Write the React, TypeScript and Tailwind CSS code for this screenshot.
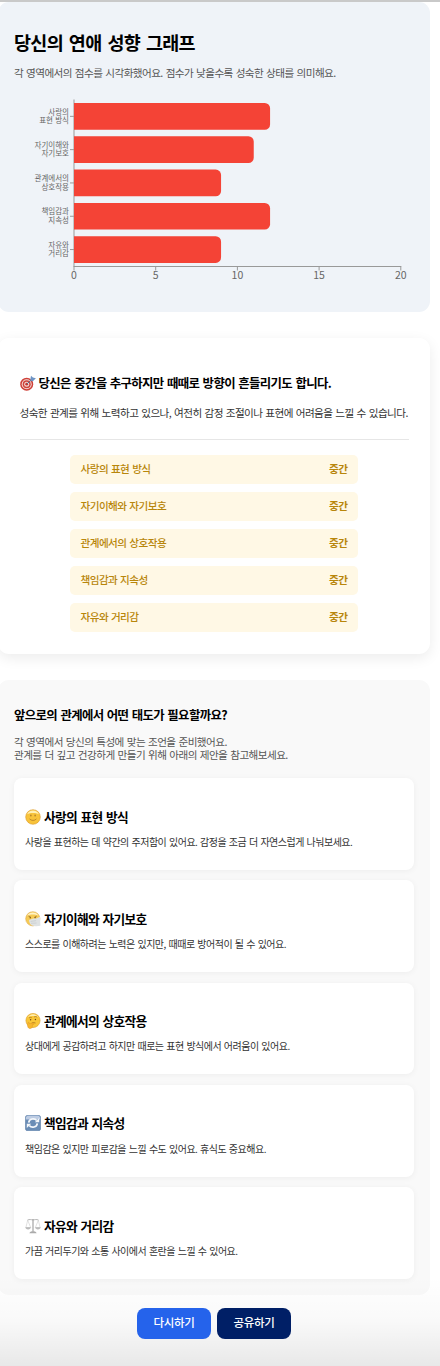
import type { ReactNode } from 'react';

type IconName = 'smile' | 'mask' | 'thinking' | 'cycle' | 'scales';

interface Score {
  area: string;
  lines: [string, string];
  value: number;
  level: string;
  icon: IconName;
  advice: string;
}

const SCORES: Score[] = [
  {
    area: '사랑의 표현 방식',
    lines: ['사랑의', '표현 방식'],
    value: 12,
    level: '중간',
    icon: 'smile',
    advice: '사랑을 표현하는 데 약간의 주저함이 있어요. 감정을 조금 더 자연스럽게 나눠보세요.',
  },
  {
    area: '자기이해와 자기보호',
    lines: ['자기이해와', '자기보호'],
    value: 11,
    level: '중간',
    icon: 'mask',
    advice: '스스로를 이해하려는 노력은 있지만, 때때로 방어적이 될 수 있어요.',
  },
  {
    area: '관계에서의 상호작용',
    lines: ['관계에서의', '상호작용'],
    value: 9,
    level: '중간',
    icon: 'thinking',
    advice: '상대에게 공감하려고 하지만 때로는 표현 방식에서 어려움이 있어요.',
  },
  {
    area: '책임감과 지속성',
    lines: ['책임감과', '지속성'],
    value: 12,
    level: '중간',
    icon: 'cycle',
    advice: '책임감은 있지만 피로감을 느낄 수도 있어요. 휴식도 중요해요.',
  },
  {
    area: '자유와 거리감',
    lines: ['자유와', '거리감'],
    value: 9,
    level: '중간',
    icon: 'scales',
    advice: '가끔 거리두기와 소통 사이에서 혼란을 느낄 수 있어요.',
  },
];

const TICKS = [0, 5, 10, 15, 20];

// Plot area inside the 400x200 chart
const LEFT = 60;
const TOP = 8.5;
const BASE = 175.5;
const UNIT = 16.34;
const BAND = 33.3;
const BAR = 26.7;

function barPath(x: number, y: number, w: number, h: number, r: number) {
  return `M${x} ${y}h${w - r}a${r} ${r} 0 0 1 ${r} ${r}v${h - 2 * r}a${r} ${r} 0 0 1 ${-r} ${r}h${-(w - r)}z`;
}

function ScoreChart() {
  return (
    <svg width="400" height="200" viewBox="0 0 400 200" className="mt-2.5 block">
      <path d={`M${LEFT} ${TOP}V${BASE}`} stroke="#999" strokeWidth="1" />
      <path d={`M${LEFT - 0.5} ${BASE}H${LEFT + UNIT * 20 + 0.5}`} stroke="#999" strokeWidth="1" />
      {SCORES.map((s, i) => {
        const y = 12 + i * BAND;
        const mid = y + BAR / 2;
        return (
          <g key={s.area}>
            <path d={barPath(LEFT, y, s.value * UNIT, BAR, 5.3)} fill="#f44336" />
            <path d={`M${LEFT - 4} ${mid}h4`} stroke="#999" strokeWidth="1" />
            <g className="fill-[#666] text-[7.5px] [word-spacing:0.5px]" textAnchor="end">
              <text x={LEFT - 5} y={mid - 1.8}>{s.lines[0]}</text>
              <text x={LEFT - 5} y={mid + 6.6}>{s.lines[1]}</text>
            </g>
          </g>
        );
      })}
      {TICKS.map(t => (
        <g key={t}>
          <path d={`M${LEFT + t * UNIT} ${BASE}v4`} stroke="#999" strokeWidth="1" />
          <text x={LEFT + t * UNIT} y={BASE + 12.2} textAnchor="middle" className="fill-[#666] text-[10.5px]">
            {t}
          </text>
        </g>
      ))}
    </svg>
  );
}

function TargetIcon() {
  return (
    <svg width="16" height="16" viewBox="0 0 16 16" className="shrink-0">
      <circle cx="6.7" cy="9.2" r="6.5" fill="#cf4038" />
      <circle cx="6.7" cy="9.2" r="5" fill="#f1dedb" />
      <circle cx="6.7" cy="9.2" r="4" fill="#d0453c" />
      <circle cx="6.7" cy="9.2" r="2.5" fill="#f3dcd8" />
      <circle cx="6.7" cy="9.2" r="1.4" fill="#c9372f" />
      <path d="M6.9 9 13 3.3" stroke="#546f92" strokeWidth="1" />
      <path d="M10.2 5.2 11 .8l1.9 1.6 3 .8-3.3 3.3z" fill="#6e94c4" />
    </svg>
  );
}

const ICONS: Record<IconName, ReactNode> = {
  smile: (
    <>
      <circle cx="8" cy="8" r="7.3" fill="#f8c33a" stroke="#dc9a2c" strokeWidth=".6" />
      <path d="M2.1 5.2a6.6 6.6 0 0 1 11.8 0C11 3.6 5 3.6 2.1 5.2z" fill="#fff0b5" />
      <ellipse cx="5.9" cy="6.6" rx=".6" ry="1" fill="#9c6c24" />
      <ellipse cx="10.1" cy="6.6" rx=".6" ry="1" fill="#9c6c24" />
      <path d="M4.8 10.2c1.6 1.7 4.8 1.7 6.4 0" stroke="#b07a26" strokeWidth=".8" fill="none" strokeLinecap="round" />
    </>
  ),
  mask: (
    <>
      <circle cx="7.8" cy="7.8" r="7.1" fill="#f6cb55" stroke="#dfa94a" strokeWidth=".6" />
      <path d="M2.2 4.6a6.5 6.5 0 0 1 11.2 0C10.5 3 5.2 3 2.2 4.6z" fill="#fff3c8" />
      <path d="M3.4 5.1 5.8 6M11.8 5.1 9.6 6" stroke="#9b6b24" strokeWidth=".7" />
      <circle cx="5.2" cy="6.7" r=".7" fill="#6f4816" />
      <circle cx="10.1" cy="6.7" r=".7" fill="#6f4816" />
      <path d="M4 9.1c2-1.2 5-1.9 7.2-1.6l3.8-1.7.4 9-4.2.5c-4.2.1-6.8-1.6-7.2-6.2z" fill="#dfe2e3" />
      <path d="m5.6 10.4 5.5-.7M6 12.3l5.6-.3" stroke="#b9bec1" strokeWidth=".5" />
    </>
  ),
  thinking: (
    <>
      <circle cx="8" cy="7.5" r="7.1" fill="#f9c638" stroke="#de9d2c" strokeWidth=".6" />
      <path d="M2.5 4.5a6.4 6.4 0 0 1 11 0C10.8 2.6 5.2 2.6 2.5 4.5z" fill="#ffedb0" />
      <path d="M4 5.1c.8-.8 1.8-.9 2.7-.4M9.2 4c1-.7 2.2-.5 2.9.2" stroke="#99641d" strokeWidth=".7" fill="none" />
      <circle cx="5.6" cy="6.7" r=".7" fill="#6f4816" />
      <circle cx="10.4" cy="6.5" r=".7" fill="#6f4816" />
      <path d="M6.6 10.1c1.3-.6 2.6-.6 3.9-.1" stroke="#99641d" strokeWidth=".7" fill="none" />
      <path d="M3.2 9.3c.8-.3 1.2.5 1.3 1.4l4-.6c1.1 0 1 1.1 0 1.3l-1.2.3c.5 2-.3 3.8-2 3.9-2.6.1-3.5-3.1-2.1-6.3z" fill="#f7b62e" stroke="#d98d22" strokeWidth=".4" />
    </>
  ),
  cycle: (
    <>
      <rect x=".3" y=".2" width="15.4" height="15.6" rx="2.6" fill="#6a8db6" stroke="#597ba4" strokeWidth=".5" />
      <path d="M.8 3.4Q.8.8 3.2.8h9.6q2.4 0 2.4 2.6v1H.8z" fill="#bdcce3" />
      <path d="M3.7 7.7c.4-4 5.7-5.2 8-2.1M12.3 8.3c-.4 4-5.7 5.2-8 2.1" stroke="#f4f7fa" strokeWidth="1.7" fill="none" />
      <path d="M9.8 7.3h4.4V3zM6.2 8.7H1.8V13z" fill="#f4f7fa" />
    </>
  ),
  scales: (
    <g fill="none" stroke="#a3a3a3" strokeWidth=".8">
      <path d="M2.5 2c2-.8 3.6-.4 5.5 0 1.9-.4 3.5-.8 5.5 0" />
      <path d="M8 1v12.5" strokeWidth="1.2" />
      <path d="M2.7 2.2.9 9.5h4.8zM13.3 2.2l-2.9 7.3h4.7z" strokeWidth=".5" stroke="#c2c2c2" />
      <path d="M.6 9.7h5c-.8 1.9-4.2 1.9-5 0zM10.4 9.7h5c-.8 1.9-4.2 1.9-5 0z" fill="#c6c6c6" strokeWidth=".5" />
      <path d="M4.8 14.8c.6-1.5 5.8-1.5 6.4 0z" fill="#a3a3a3" />
    </g>
  ),
};

function AreaIcon({ name }: { name: IconName }) {
  return (
    <svg width="16" height="16" viewBox="0 0 16 16" className="shrink-0">
      {ICONS[name]}
    </svg>
  );
}

export default function App() {
  return (
    <div className="relative h-[1366px] w-[440px] overflow-hidden border-t-2 border-[#c9c9c9] bg-white font-['Noto_Sans_CJK_KR',sans-serif] whitespace-nowrap text-black">
      {/* Score graph */}
      <section className="-ml-0.5 h-[310px] w-[432px] rounded-[11px] bg-[#eff3f8] px-4 pt-[26px]">
        <h2 className="text-[18.5px] leading-7 font-bold tracking-[-0.7px] [word-spacing:2.4px]">당신의 연애 성향 그래프</h2>
        <p className="mt-[9px] text-[10.6px] leading-4 tracking-[-0.57px] text-[#555] [word-spacing:1.1px]">
          각 영역에서의 점수를 시각화했어요. 점수가 낮을수록 성숙한 상태를 의미해요.
        </p>
        <ScoreChart />
      </section>

      {/* Overall result */}
      <section className="mt-[26px] -ml-0.5 h-[316px] w-[432px] rounded-[11px] bg-white px-[21.5px] pt-[35px] shadow-[0_4px_14px_rgba(0,0,0,0.08)]">
        <h3 className="flex items-center gap-[3px] text-[12.4px] leading-5 font-bold tracking-[-0.64px] [word-spacing:1.2px]">
          <TargetIcon />
          당신은 중간을 추구하지만 때때로 방향이 흔들리기도 합니다.
        </h3>
        <p className="mt-3 text-[10.6px] leading-4 tracking-[-0.57px] text-[#333] [word-spacing:1.1px]">
          성숙한 관계를 위해 노력하고 있으나, 여전히 감정 조절이나 표현에 어려움을 느낄 수 있습니다.
        </p>
        <hr className="mt-[18px] border-[#e6e6e6]" />
        <ul className="mx-auto mt-[15px] flex w-72 flex-col gap-2">
          {SCORES.map(s => (
            <li
              key={s.area}
              className="flex h-[29px] items-center justify-between rounded-[5px] bg-[#fff8e5] px-[10.5px] pb-0.5 text-[10.6px] text-[#b8860b]"
            >
              <span className="font-medium tracking-[-0.55px] [word-spacing:1px]">{s.area}</span>
              <span className="font-bold tracking-[-0.5px]">{s.level}</span>
            </li>
          ))}
        </ul>
      </section>

      {/* Advice for each area */}
      <section className="mt-[26px] -ml-0.5 h-[615px] w-[432px] rounded-[11px] bg-[#f9f9f9] px-4 pt-[25px]">
        <h3 className="text-[12.4px] leading-5 font-bold tracking-[-0.64px] [word-spacing:1.2px]">
          앞으로의 관계에서 어떤 태도가 필요할까요?
        </h3>
        <p className="mt-[10px] text-[10.6px] leading-[13px] tracking-[-0.56px] text-[#555] [word-spacing:1.1px]">
          각 영역에서 당신의 특성에 맞는 조언을 준비했어요.
          <br />
          관계를 더 깊고 건강하게 만들기 위해 아래의 제안을 참고해보세요.
        </p>
        <div className="mt-[17px] flex flex-col gap-[10.5px]">
          {SCORES.map(s => (
            <article key={s.area} className="h-[91.8px] rounded-lg bg-white px-[11px] pt-[28.6px] shadow-[0_1px_6px_rgba(0,0,0,0.05)]">
              <h4 className="flex items-center gap-[3px] text-[12.7px] leading-5 font-bold tracking-[-0.65px] [word-spacing:1.2px]">
                <AreaIcon name={s.icon} />
                {s.area}
              </h4>
              <p className="mt-[7.2px] text-[10px] leading-4 tracking-[-0.51px] text-[#333] [word-spacing:1px]">{s.advice}</p>
            </article>
          ))}
        </div>
      </section>

      <div className="mt-[13px] ml-[137px] flex gap-1.5 text-[11.5px] font-medium tracking-[-0.3px] text-white">
        <button className="relative z-10 h-[31px] w-[74px] rounded-lg bg-[#2563eb] pb-0.5">다시하기</button>
        <button className="relative z-10 h-[31px] w-[74px] rounded-lg bg-[#001f66] pb-0.5">공유하기</button>
      </div>

      {/* Fade along the bottom edge */}
      <div className="pointer-events-none absolute inset-x-0 bottom-0 h-[90px] bg-[linear-gradient(to_bottom,transparent,rgba(0,0,0,0.025)_50%,rgba(0,0,0,0.09))]" />
    </div>
  );
}
